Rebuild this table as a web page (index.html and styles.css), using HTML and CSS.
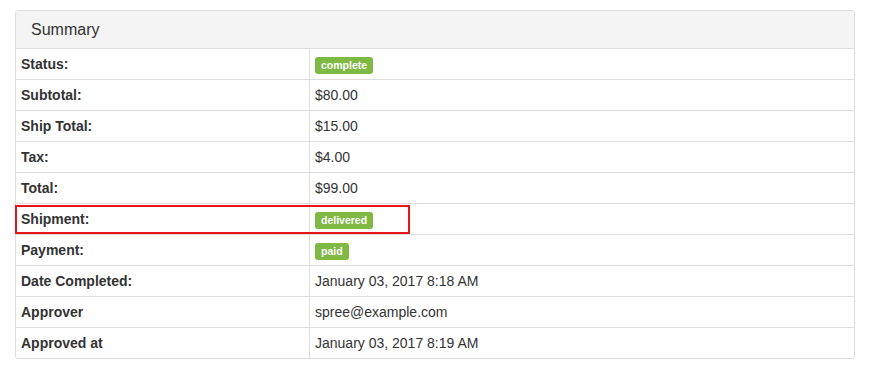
FILE: index.html
```html
<!DOCTYPE html>
<html>
<head>
<meta charset="utf-8">
<link rel="stylesheet" href="styles.css">
</head>
<body>
<div class="panel">
  <div class="panel-heading">Summary</div>
  <table class="summary">
    <tr><th>Status:</th><td><span class="label">complete</span></td></tr>
    <tr><th>Subtotal:</th><td>$80.00</td></tr>
    <tr><th>Ship Total:</th><td>$15.00</td></tr>
    <tr><th>Tax:</th><td>$4.00</td></tr>
    <tr><th>Total:</th><td>$99.00</td></tr>
    <tr><th>Shipment:</th><td><span class="label">delivered</span></td></tr>
    <tr><th>Payment:</th><td><span class="label">paid</span></td></tr>
    <tr><th>Date Completed:</th><td>January 03, 2017 8:18 AM</td></tr>
    <tr><th>Approver</th><td>spree@example.com</td></tr>
    <tr><th>Approved at</th><td>January 03, 2017 8:19 AM</td></tr>
  </table>
  <div class="highlight"></div>
</div>
</body>
</html>
```
FILE: styles.css
```css
html, body {
  margin: 0;
  padding: 0;
  background: #fff;
}
body {
  font-family: "Liberation Sans", Arial, sans-serif;
  font-size: 14px;
  line-height: 20px;
  color: #333;
  padding: 10px 17px 0 15px;
}
.panel {
  position: relative;
  border: 1px solid #ddd;
  border-radius: 3px;
  background: #fff;
}
.panel-heading {
  background: #f4f4f4;
  border-bottom: 1px solid #ddd;
  padding: 9px 15px 9px 15px;
  font-size: 16px;
  line-height: 19px;
  color: #333;
}
.summary {
  width: 100%;
  border-collapse: collapse;
}
.summary th,
.summary td {
  padding: 5px 5px;
  text-align: left;
  vertical-align: top;
  line-height: 20px;
  border-top: 1px solid #ddd;
}
.summary tr:first-child th,
.summary tr:first-child td {
  border-top: none;
}
.summary th {
  width: 283px;
  font-weight: bold;
  border-right: 1px solid #ddd;
}
.label {
  display: inline-block;
  background: #7fb843;
  color: #fff;
  font-size: 10.5px;
  font-weight: bold;
  line-height: 12px;
  padding: 2px 6px 3px 6px;
  border-radius: 3px;
  vertical-align: 0;
}
.highlight {
  position: absolute;
  left: -1px;
  top: 194px;
  width: 391px;
  height: 25px;
  border: 2px solid #e8141b;
}
```
